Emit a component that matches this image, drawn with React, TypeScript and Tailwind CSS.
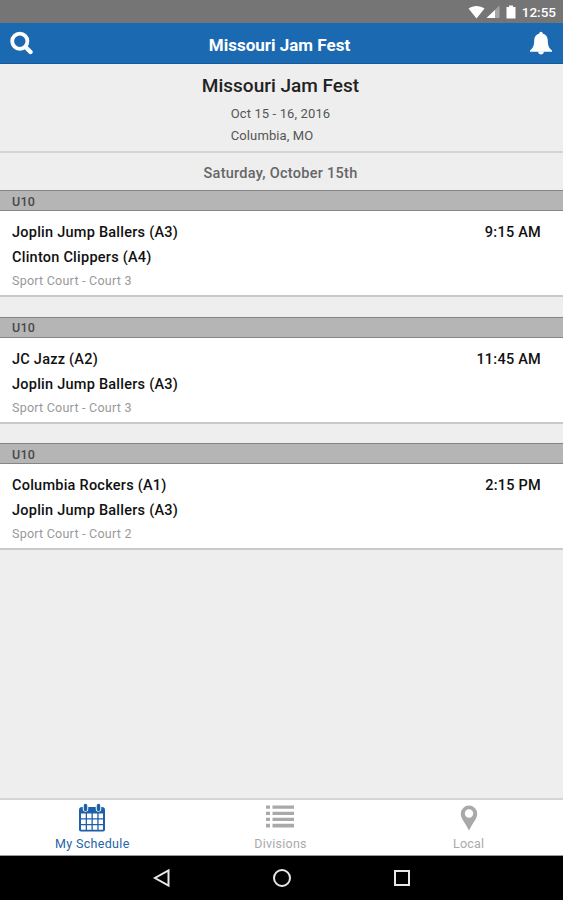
type Game = {
    id: number
    division: string
    home: string
    away: string
    court: string
    time: string
}

const games: Game[] = [
    { id: 1, division: "U10", home: "Joplin Jump Ballers (A3)", away: "Clinton Clippers (A4)", court: "Sport Court - Court 3", time: "9:15 AM" },
    { id: 2, division: "U10", home: "JC Jazz (A2)", away: "Joplin Jump Ballers (A3)", court: "Sport Court - Court 3", time: "11:45 AM" },
    { id: 3, division: "U10", home: "Columbia Rockers (A1)", away: "Joplin Jump Ballers (A3)", court: "Sport Court - Court 2", time: "2:15 PM" },
]

const StatusBar = () => (
    <div className="flex h-[23px] shrink-0 items-center justify-end bg-[#757575] pr-[7px] text-white">
        <svg width="17" height="14" viewBox="0 0 17 14" fill="currentColor">
            <path d="M.5 3.6C5 .2 12 .2 16.500 3.600L8.500 13.500Z" />
        </svg>
        <svg className="ml-px" width="14" height="14" viewBox="0 0 14 14" fill="currentColor">
            <path d="M13.500 .5V13H.5Z" opacity=".35" />
            <path d="M9 5V13H.5Z" />
        </svg>
        <svg className="ml-[6px]" width="10" height="14" viewBox="0 0 10 14" fill="currentColor">
            <path d="M3 .5h4V2h2.500v11.500H.5V2H3Z" />
        </svg>
        <span className="ml-[6px] mt-[2px] text-[13.500px] font-medium leading-none">12:55</span>
    </div>
)

const Header = () => (
    <header className="flex h-[41px] shrink-0 items-center justify-between border-b border-[#125ba0] bg-[#1b6ab1] pl-[10px] pr-[10px] text-white">
        <svg width="24" height="24" viewBox="0 0 24 24" fill="none" stroke="currentColor">
            <circle cx="9.800" cy="10.300" r="7.600" strokeWidth="3.800" />
            <path d="M15.500 16L20.500 21" strokeWidth="4.400" strokeLinecap="round" />
        </svg>
        <h1 className="mr-[4px] mt-[4px] text-[17px] font-bold leading-[24px]">Missouri Jam Fest</h1>
        <svg width="24" height="24" viewBox="0 0 24 24" fill="currentColor">
            <path d="M12 .7c1 0 1.700.8 1.700 1.900 3.300.8 5 3.300 5.100 6.900.1 4.800.9 7.500 4.200 9.900v1.300H1v-1.300C4.300 17 5.100 14.300 5.200 9.500c.1-3.600 1.800-6.100 5.100-6.900C10.300 1.500 11 .7 12 .7Z" />
            <path d="M9 20.600h6c-.3 2-1.400 3-3 3s-2.700-1-3-3Z" />
        </svg>
    </header>
)

const GameCard = ({ game }: { game: Game }) => (
    <section className="mb-[19.500px]">
        <div className="flex h-[21px] items-center border-y border-[#858585] bg-[#b5b5b5] px-3 pt-[3px] text-[12.500px] font-medium tracking-[0.200px] text-[#484848]">
            {game.division}
        </div>
        <div className="flex h-[86px] justify-between border-b-2 border-[#c9c9c9] bg-white pl-3 pr-[22px] pt-[9px] text-[14.500px] font-medium leading-[25px] text-[#111]">
            <div>
                <p className="tracking-[0.240px]">{game.home}</p>
                <p className="tracking-[0.240px]">{game.away}</p>
                <p className="text-[12.500px] font-normal leading-[22px] tracking-[0.240px] text-[#999]">{game.court}</p>
            </div>
            <time className="tracking-[0.240px]">{game.time}</time>
        </div>
    </section>
)

const TabBar = () => (
    <nav className="grid h-[58px] shrink-0 grid-cols-3 border-b border-t-2 border-b-[#999] border-t-[#d5d5d5] bg-white text-[12.500px] leading-[14px] text-[#aaa]">
        <a className="flex flex-col items-center pr-[3px] pt-[3px] text-[#2565a8]">
            <svg width="28" height="30" viewBox="0 0 28 30">
                <path fill="#1d61a8" d="M4 4h20q3 0 3 3v19.500q0 2-2 2H3q-2 0-2-2V7q0-3 3-3Z" />
                <path fill="#fff" d="M3 10.500h4.700v4.800H3zM9 10.500h4.500v4.800H9zM14.800 10.500h4.500v4.800h-4.500zM20.600 10.500H25v4.800h-4.400zM3 16.600h4.700v4.400H3zM9 16.600h4.500v4.400H9zM14.800 16.600h4.500v4.400h-4.500zM20.600 16.600H25v4.400h-4.400zM3 22.300h4.700v4.500H3zM9 22.300h4.500v4.500H9zM14.800 22.300h4.500v4.500h-4.500zM20.600 22.300H25v4.500h-4.400z" />
                <path stroke="#fff" strokeWidth="5.500" strokeLinecap="round" d="M7.500 3v3M20.500 3v3" />
                <path stroke="#1d61a8" strokeWidth="3.500" strokeLinecap="round" d="M7.500 2.500v4M20.500 2.500v4" />
            </svg>
            <span className="mt-[4px] tracking-[0.340px]">My Schedule</span>
        </a>
        <a className="flex flex-col items-center pr-[2px] pt-[3px]">
            <svg width="28" height="30" viewBox="0 0 28 30" fill="#a9a9a9">
                <path d="M0 2.500h4v3.300H0zM6.500 2.500H28v3.300H6.500zM0 8.800h4v3.300H0zM6.500 8.800H28v3.300H6.500zM0 14.800h4v3.300H0zM6.500 14.800H28v3.300H6.500zM0 20.800h4v3.600H0zM6.500 20.800H28v3.600H6.500z" />
            </svg>
            <span className="mt-[4px] tracking-[0.250px]">Divisions</span>
        </a>
        <a className="flex flex-col items-center pr-px pt-[3px]">
            <svg width="28" height="30" viewBox="0 0 28 30">
                <path fill="#a9a9a9" fillRule="evenodd" d="M14 2.500a8.200 8.200 0 0 1 8.200 8.200C22.200 16 17.500 20 14 27.500 10.500 20 5.800 16 5.800 10.700A8.200 8.200 0 0 1 14 2.500Zm0 3.800a4.200 4.200 0 1 0 0 8.400 4.200 4.200 0 0 0 0-8.400Z" />
            </svg>
            <span className="mt-[4px] tracking-[0.250px]">Local</span>
        </a>
    </nav>
)

const AndroidNav = () => (
    <div className="flex h-[44px] shrink-0 items-center justify-center gap-[100px] bg-black">
        <svg width="20" height="20" viewBox="0 0 20 20" fill="none" stroke="#e8e8e8" strokeWidth="2">
            <path d="M16.500 2.500v15L3 10Z" />
        </svg>
        <svg width="20" height="20" viewBox="0 0 20 20" fill="none" stroke="#e8e8e8" strokeWidth="2">
            <circle cx="10" cy="10" r="8" />
        </svg>
        <svg width="20" height="20" viewBox="0 0 20 20" fill="none" stroke="#e8e8e8" strokeWidth="2">
            <rect x="3" y="3" width="14" height="14" />
        </svg>
    </div>
)

const App = () => {
    return (
        <div className="flex h-[900px] w-[563px] flex-col overflow-hidden bg-[#eee] font-['Roboto',sans-serif]">
            <StatusBar />
            <Header />
            <main className="flex-1">
                {/* Event info */}
                <div className="flex h-[89px] flex-col items-center border-b-2 border-[#d4d4d4] pt-[10px]">
                    <h2 className="mr-[2px] text-[19px] font-medium leading-[24px] text-[#222]">Missouri Jam Fest</h2>
                    <div className="mr-[2px] mt-[5px] text-[13px] leading-[22px] tracking-[0.120px] text-[#555]">
                        <p>Oct 15 - 16, 2016</p>
                        <p>Columbia, MO</p>
                    </div>
                </div>
                <h3 className="h-[37px] pr-[2px] pt-[2px] text-center text-[14.500px] font-medium leading-[38px] tracking-[0.280px] text-[#666]">
                    Saturday, October 15th
                </h3>

                {games.map(game => (
                    <GameCard key={game.id} game={game} />
                ))}
            </main>
            <TabBar />
            <AndroidNav />
        </div>
    )
}

export default App
